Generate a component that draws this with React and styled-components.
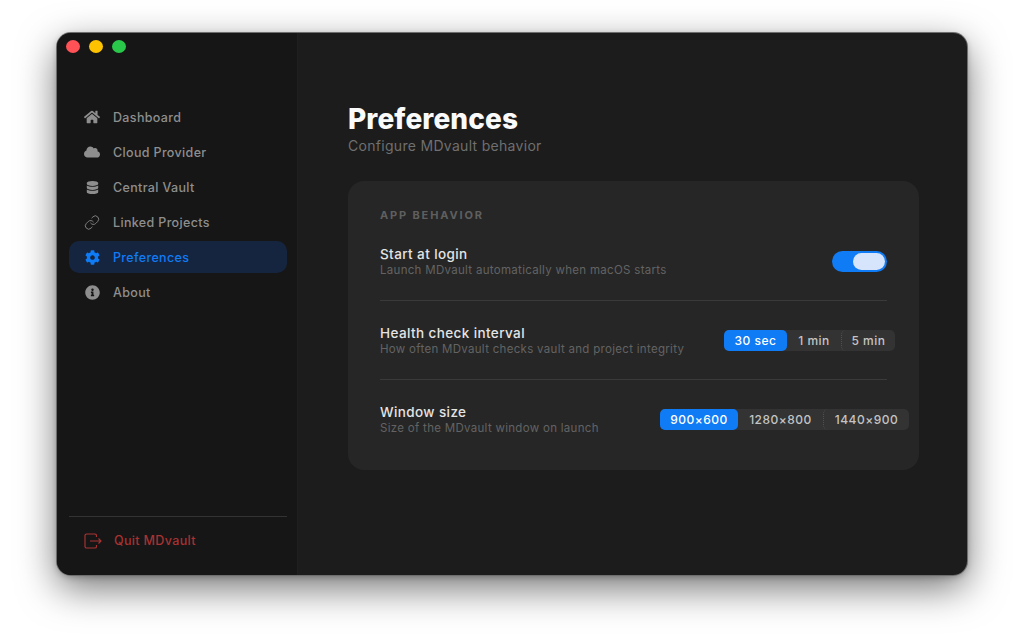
import styled, { createGlobalStyle } from "styled-components";
import { FaHome, FaCloud, FaDatabase, FaCog, FaInfoCircle } from "react-icons/fa";
import { Link } from "lucide-react";

const GlobalStyle = createGlobalStyle`
    html, body {
        margin: 0;
        background: #fff;
        font-family: Inter, "Liberation Sans", sans-serif;
    }
`;

const Page = styled.div`
    width: 1024px;
    height: 640px;
    padding: 33px 57px 65px;
    box-sizing: border-box;
    overflow: hidden;
`;

const Window = styled.div`
    display: flex;
    height: 100%;
    border-radius: 14px;
    overflow: hidden;
    background: #1c1c1c;
    box-shadow: 0 0 0 1px #6e6e6e, 0 13px 38px rgba(0, 0, 0, 0.55), 0 2px 6px rgba(0, 0, 0, 0.25);
`;

const Sidebar = styled.aside`
    width: 241px;
    flex-shrink: 0;
    display: flex;
    flex-direction: column;
    box-sizing: border-box;
    padding: 7px 10px 0 12px;
    background: #161616;
    border-right: 1px solid #1f1f1f;
`;

const Lights = styled.div`
    display: flex;
    gap: 9px;
    margin-left: -3px;
    height: 61px;
`;

const Light = styled.span`
    width: 14px;
    height: 13px;
    border-radius: 50%;
    background: ${({ $color }) => $color};
`;

const Nav = styled.nav`
    display: flex;
    flex-direction: column;
    gap: 3px;
    flex: 1;
`;

const NavItem = styled.div`
    display: flex;
    align-items: center;
    gap: 13px;
    height: 32px;
    padding: 0 15px;
    border-radius: 10px;
    font-size: 12.5px;
    font-weight: 500;
    letter-spacing: 0.35px;
    color: ${({ $active }) => ($active ? "#0f7bf5" : "#8e8e8e")};
    background: ${({ $active }) => ($active ? "#16253f" : "transparent")};
`;

const IconSlot = styled.span`
    width: 16px;
    height: 16px;
    display: flex;
    align-items: center;
    justify-content: center;
    flex-shrink: 0;
`;

const Footer = styled.div`
    border-top: 1px solid #333;
    height: 47px;
    margin-bottom: 11px;
    display: flex;
    align-items: center;
    padding: 0 15px;
    gap: 12px;
    font-size: 12.5px;
    font-weight: 500;
    letter-spacing: 0.35px;
    color: #a83232;
`;

const Main = styled.main`
    flex: 1;
    padding: 69px 48px 0 50px;
`;

const Title = styled.h1`
    margin: 0;
    font-size: 28px;
    line-height: 34px;
    font-weight: 800;
    letter-spacing: 0.1px;
    color: #fafafa;
`;

const Subtitle = styled.p`
    margin: 1px 0 0;
    font-size: 14px;
    line-height: 18px;
    letter-spacing: 0.3px;
    color: #6f6f6f;
`;

const Card = styled.section`
    margin-top: 26px;
    height: 289px;
    box-sizing: border-box;
    padding: 28px 32px 0;
    border-radius: 16px;
    background: #262626;
`;

const SectionLabel = styled.div`
    font-size: 11px;
    line-height: 12px;
    margin-bottom: 1px;
    font-weight: 700;
    letter-spacing: 1.85px;
    color: #5f5f5f;
`;

const Row = styled.div`
    display: flex;
    align-items: center;
    justify-content: space-between;
    height: 79px;
    border-bottom: ${({ $last }) => ($last ? "none" : "1px solid #3a3a3a")};
    box-sizing: border-box;
`;

const RowText = styled.div`
    display: flex;
    flex-direction: column;
    gap: 1px;
`;

const RowTitle = styled.div`
    font-size: 13.5px;
    line-height: 16px;
    font-weight: 500;
    letter-spacing: 0.4px;
    color: #e4e4e4;
`;

const RowHint = styled.div`
    font-size: 11.5px;
    line-height: 14px;
    letter-spacing: 0.3px;
    color: #636363;
`;

const Toggle = styled.div`
    width: 55px;
    height: 21px;
    box-sizing: border-box;
    padding: 2px;
    border-radius: 11px;
    background: #0f7bf5;
    display: flex;
    justify-content: flex-end;
`;

const Knob = styled.div`
    width: 32px;
    height: 17px;
    border-radius: 9px;
    background-color: #f8faff;
    background-image: radial-gradient(#d3e3fb 0.7px, transparent 0.8px);
    background-size: 2px 2px;
`;

const Segments = styled.div`
    display: flex;
    flex-shrink: 0;
    height: 21px;
    border-radius: 5px;
    background: #333;
    margin-right: ${({ $overflow }) => `-${$overflow}px`};
`;

const Segment = styled.div`
    display: flex;
    align-items: center;
    justify-content: center;
    box-sizing: border-box;
    width: ${({ $width }) => $width}px;
    border-radius: 5px;
    font-size: 12px;
    font-weight: 500;
    letter-spacing: 0.5px;
    color: ${({ $active }) => ($active ? "#fff" : "#c4c4c4")};
    background: ${({ $active }) => ($active ? "#0f7bf5" : "transparent")};
    border-left: ${({ $divided }) => ($divided ? "1px dotted #505050" : "none")};
`;

const QuitIcon = () => (
    <svg width="18" height="16" viewBox="0 0 18 16" fill="none" stroke="#a83232" strokeWidth="1.2">
        <path d="M12.5 4V2.6A1.6 1.6 0 0 0 10.9 1H2.6A1.6 1.6 0 0 0 1 2.6v10.8A1.6 1.6 0 0 0 2.6 15h8.3a1.6 1.6 0 0 0 1.6-1.6V12" />
        <path d="M6 8h11M14.5 5.5 17 8l-2.5 2.5" />
    </svg>
);

const navItems = [
    { label: "Dashboard", icon: FaHome, size: 16 },
    { label: "Cloud Provider", icon: FaCloud, size: 16 },
    { label: "Central Vault", icon: FaDatabase, size: 13 },
    { label: "Linked Projects", icon: Link, size: 17, thin: true },
    { label: "Preferences", icon: FaCog, size: 15, active: true },
    { label: "About", icon: FaInfoCircle, size: 15 },
];

function App() {
    return (
        <Page>
            <GlobalStyle />
            <Window>
                <Sidebar>
                    <Lights>
                        <Light $color="#ff5257" />
                        <Light $color="#fec300" />
                        <Light $color="#29c84a" />
                    </Lights>
                    <Nav>
                        {navItems.map((item) => {
                            const Icon = item.icon;
                            return (
                                <NavItem key={item.label} $active={item.active}>
                                    <IconSlot>
                                        <Icon
                                            size={item.size}
                                            color={item.active ? "#0f7bf5" : "#8e8e8e"}
                                            strokeWidth={item.thin ? 1.3 : undefined}
                                        />
                                    </IconSlot>
                                    {item.label}
                                </NavItem>
                            );
                        })}
                    </Nav>
                    <Footer>
                        <QuitIcon />
                        Quit MDvault
                    </Footer>
                </Sidebar>
                <Main>
                    <Title>Preferences</Title>
                    <Subtitle>Configure MDvault behavior</Subtitle>
                    <Card>
                        <SectionLabel>APP BEHAVIOR</SectionLabel>
                        <Row>
                            <RowText>
                                <RowTitle>Start at login</RowTitle>
                                <RowHint>Launch MDvault automatically when macOS starts</RowHint>
                            </RowText>
                            <Toggle>
                                <Knob />
                            </Toggle>
                        </Row>
                        <Row>
                            <RowText>
                                <RowTitle>Health check interval</RowTitle>
                                <RowHint>How often MDvault checks vault and project integrity</RowHint>
                            </RowText>
                            <Segments $overflow={8}>
                                <Segment $active $width={63}>30 sec</Segment>
                                <Segment $width={54}>1 min</Segment>
                                <Segment $width={54} $divided>5 min</Segment>
                            </Segments>
                        </Row>
                        <Row $last>
                            <RowText>
                                <RowTitle>Window size</RowTitle>
                                <RowHint>Size of the MDvault window on launch</RowHint>
                            </RowText>
                            <Segments $overflow={22}>
                                <Segment $active $width={78}>900×600</Segment>
                                <Segment $width={85}>1280×800</Segment>
                                <Segment $width={86} $divided>1440×900</Segment>
                            </Segments>
                        </Row>
                    </Card>
                </Main>
            </Window>
        </Page>
    );
}

export default App;
